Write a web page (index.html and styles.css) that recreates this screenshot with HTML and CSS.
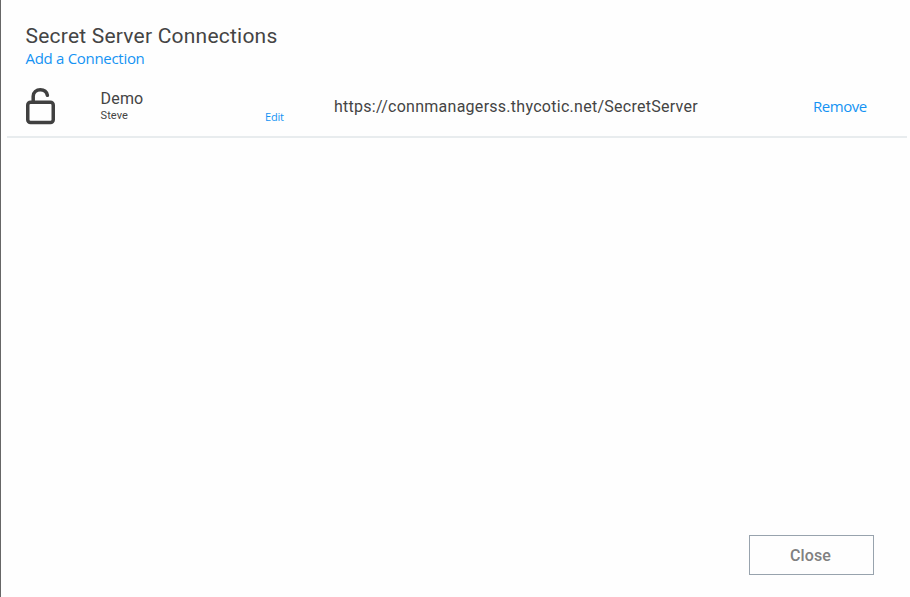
FILE: index.html
```html
<!DOCTYPE html>
<html lang="en">
<head>
<meta charset="utf-8">
<title>Secret Server Connections</title>
<link rel="stylesheet" href="styles.css">
</head>
<body>
<main class="dialog">
  <header class="header">
    <h1 class="title">Secret Server Connections</h1>
    <a class="link add">Add a Connection</a>
  </header>
  <section class="row">
    <svg class="lock" viewBox="0 0 30 38" width="30" height="38" fill="none" stroke="#404040">
      <rect x="1.75" y="14.25" width="25.5" height="20.3" rx="2.8" stroke-width="3.5"/>
      <path d="M7.2 14V8.2C7.2 4.3 10.4 1.8 14.3 1.8C18 1.8 20.7 4 21.4 7.3" stroke-width="3.5" stroke-linecap="round"/>
    </svg>
    <div class="names">
      <span class="name">Demo</span>
      <span class="user">Steve</span>
    </div>
    <a class="link edit">Edit</a>
    <span class="url">https://connmanagerss.thycotic.net/SecretServer</span>
    <a class="link remove">Remove</a>
  </section>
  <footer class="footer"><button class="close">Close</button></footer>
</main>
</body>
</html>
```
FILE: styles.css
```css
* { box-sizing: border-box; }
body { margin: 0; background: #fefefe; font-family: Roboto, sans-serif; color: #444; }
.dialog { height: 597px; display: flex; flex-direction: column; border-left: 1px solid #666; padding-left: 6px; overflow: hidden; }
.header { height: 84px; padding: 23px 0 0 18.5px; display: flex; flex-direction: column; align-items: flex-start; }
.title { margin: 0; font-size: 21px; line-height: 26px; font-weight: 400; letter-spacing: 0.22px; white-space: nowrap; }
.link { color: #1593f3; font-family: "Open Sans", sans-serif; white-space: nowrap; }
.add { font-size: 15px; line-height: 20px; letter-spacing: -0.3px; margin-top: -1px; }
.row { height: 54px; width: 900px; border-bottom: 2px solid #e8ecee; display: grid; grid-template-columns: 93px 165px 69px 479px 94px; }
.lock { margin: 4px 0 0 19px; }
.names { display: flex; flex-direction: column; padding: 5px 0 0 0.5px; }
.name { font-size: 16px; line-height: 20px; letter-spacing: 0.2px; }
.user { font-size: 11px; line-height: 14px; letter-spacing: 0.1px; }
.edit { font-size: 11px; line-height: 16px; padding-top: 25px; letter-spacing: -0.2px; }
.url { font-size: 16px; line-height: 20px; padding-top: 13px; letter-spacing: 0.27px; white-space: nowrap; }
.remove { font-size: 15px; line-height: 20px; padding-top: 12px; letter-spacing: -0.45px; }
.footer { margin-top: auto; display: flex; justify-content: flex-end; padding: 0 36px 22px 0; }
.close { width: 125px; height: 40px; border: 1px solid #98a3ad; background: #fefefe; color: #808080; font: 500 16px/20px Roboto, sans-serif; padding: 2px 2px 0 0; letter-spacing: 0.1px; }
```
